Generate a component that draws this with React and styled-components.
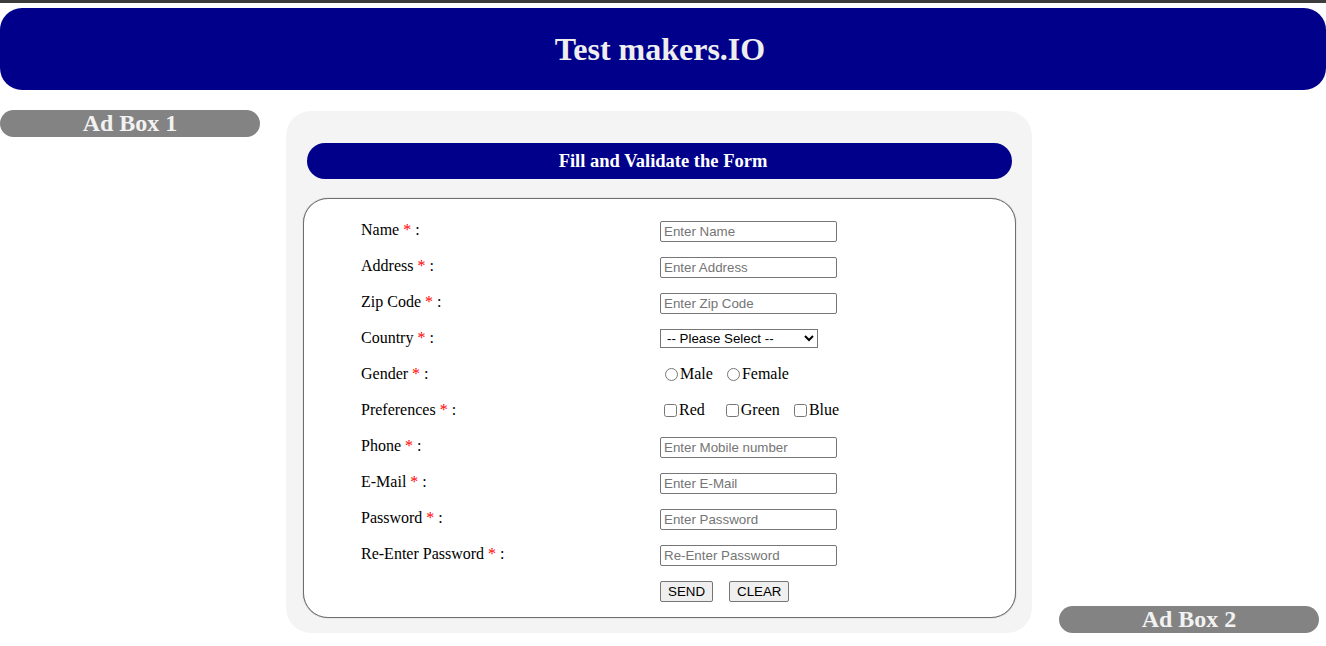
import React from "react";
import styled, { createGlobalStyle } from "styled-components";

const GlobalStyle = createGlobalStyle`
  html, body {
    margin: 0;
    padding: 0;
    background: #ffffff;
    font-family: "Liberation Serif", "Times New Roman", serif;
  }
  * { box-sizing: border-box; }
`;

const Page = styled.div`
  width: 1326px;
  min-height: 646px;
  display: flex;
  flex-direction: column;
`;

const TopRule = styled.div`
  height: 3px;
  background: #3c3c3c;
`;

const Header = styled.header`
  margin-top: 5px;
  height: 82px;
  background: #00008b;
  border-radius: 22px;
  padding-right: 6px;
  display: flex;
  align-items: center;
  justify-content: center;
`;

const HeaderTitle = styled.h1`
  margin: 0;
  font-family: "Liberation Serif", "Times New Roman", serif;
  font-size: 32px;
  font-weight: bold;
  color: #eeeeee;
`;

const Content = styled.main`
  margin-top: 20px;
  display: flex;
  align-items: flex-start;
`;

const AdBox = styled.div`
  width: 260px;
  height: 27px;
  border-radius: 14px;
  background: #838383;
  color: #f2f2f2;
  font-family: "Liberation Serif", "Times New Roman", serif;
  font-size: 24px;
  font-weight: bold;
  line-height: 27px;
  text-align: center;
  margin-left: ${(p) => p.$left || 0}px;
  margin-right: ${(p) => p.$right || 0}px;
  align-self: ${(p) => (p.$bottom ? "flex-end" : "flex-start")};
`;

const Panel = styled.section`
  width: 746px;
  margin-top: 1px;
  background: #f4f4f4;
  border-radius: 25px;
  padding: 32px 16px 15px 17px;
`;

const TitleBar = styled.div`
  margin: 0 4px 19px 4px;
  height: 36px;
  border-radius: 18px;
  background: #00008b;
  display: flex;
  align-items: center;
  justify-content: center;
`;

const Title = styled.h3`
  margin: 0;
  font-family: "Liberation Serif", "Times New Roman", serif;
  font-size: 18.5px;
  font-weight: bold;
  color: #ffffff;
  padding-left: 7px;
`;

const FormBox = styled.form`
  height: 420px;
  background: #ffffff;
  border: 1px solid #6e6e6e;
  border-radius: 25px;
  box-shadow: 0 0 1px #7a7a7a;
  padding: 14px 0 8px 57px;
  display: flex;
  flex-direction: column;
`;

const Row = styled.div`
  display: grid;
  grid-template-columns: 299px auto;
  height: 36px;
  align-items: center;
`;

const Label = styled.label`
  font-family: "Liberation Serif", "Times New Roman", serif;
  font-size: 16px;
  color: #000;
  padding-bottom: 2px;
`;

const Star = styled.span`
  color: #ff0000;
`;

const TextInput = styled.input`
  width: 177px;
  height: 21px;
  margin: 0;
  padding: 1px 3px;
  border: 1px solid #767676;
  border-radius: 2px;
  font-family: "Liberation Sans", Arial, sans-serif;
  font-size: 13.33px;
  color: #000;
  background: #fff;
  &::placeholder {
    color: #757575;
  }
`;

const Select = styled.select`
  width: 158px;
  height: 19px;
  margin: 0 0 2px 0;
  padding: 0 0 0 2px;
  border: 1px solid #767676;
  border-radius: 0;
  font-family: "Liberation Sans", Arial, sans-serif;
  font-size: 13.33px;
  color: #000;
  background: #fff;
`;

const Choices = styled.div`
  display: flex;
  align-items: center;
  font-family: "Liberation Serif", "Times New Roman", serif;
  font-size: 16px;
  padding-bottom: 2px;
`;

const Choice = styled.label`
  display: inline-flex;
  align-items: center;
  margin-left: ${(p) => p.$offset}px;
`;

const Mark = styled.input`
  width: 13px;
  height: 13px;
  margin: 0 2px 0 0;
`;

const Buttons = styled.div`
  display: flex;
  gap: 16px;
`;

const Button = styled.button`
  height: 21px;
  padding: 1px 7px;
  margin: 0;
  border: 1px solid #767676;
  border-radius: 2px;
  background: #efefef;
  font-family: "Liberation Sans", Arial, sans-serif;
  font-size: 13.33px;
  color: #000;
`;

const textFields = {
  Name: "Enter Name",
  Address: "Enter Address",
  "Zip Code": "Enter Zip Code",
};

const lowerFields = [
  ["Phone", "Enter Mobile number", "tel"],
  ["E-Mail", "Enter E-Mail", "email"],
  ["Password", "Enter Password", "password"],
  ["Re-Enter Password", "Re-Enter Password", "password"],
];

function FieldLabel({ children }) {
  return (
    <Label>
      {children} <Star>*</Star> :
    </Label>
  );
}

export default function App() {
  return (
    <>
      <GlobalStyle />
      <Page>
        <TopRule />
        <Header>
          <HeaderTitle>Test makers.IO</HeaderTitle>
        </Header>
        <Content>
          <AdBox $right={26}>Ad Box 1</AdBox>
          <Panel>
            <TitleBar>
              <Title>Fill and Validate the Form</Title>
            </TitleBar>
            <FormBox onSubmit={(e) => e.preventDefault()}>
              {Object.entries(textFields).map(([label, ph]) => (
                <Row key={label}>
                  <FieldLabel>{label}</FieldLabel>
                  <div>
                    <TextInput type="text" placeholder={ph} />
                  </div>
                </Row>
              ))}
              <Row>
                <FieldLabel>Country</FieldLabel>
                <div>
                  <Select defaultValue="">
                    <option value="">-- Please Select --</option>
                    <option>India</option>
                    <option>USA</option>
                  </Select>
                </div>
              </Row>
              <Row>
                <FieldLabel>Gender</FieldLabel>
                <Choices>
                  <Choice $offset={5}>
                    <Mark type="radio" name="gender" />
                    Male
                  </Choice>
                  <Choice $offset={14}>
                    <Mark type="radio" name="gender" />
                    Female
                  </Choice>
                </Choices>
              </Row>
              <Row>
                <FieldLabel>Preferences</FieldLabel>
                <Choices>
                  <Choice $offset={4}>
                    <Mark type="checkbox" />
                    Red
                  </Choice>
                  <Choice $offset={21}>
                    <Mark type="checkbox" />
                    Green
                  </Choice>
                  <Choice $offset={14}>
                    <Mark type="checkbox" />
                    Blue
                  </Choice>
                </Choices>
              </Row>
              {lowerFields.map(([label, ph, type]) => (
                <Row key={label}>
                  <FieldLabel>{label}</FieldLabel>
                  <div>
                    <TextInput type={type} placeholder={ph} />
                  </div>
                </Row>
              ))}
              <Row>
                <span />
                <Buttons>
                  <Button type="submit">SEND</Button>
                  <Button type="reset">CLEAR</Button>
                </Buttons>
              </Row>
            </FormBox>
          </Panel>
          <AdBox $left={27} $bottom>
            Ad Box 2
          </AdBox>
        </Content>
      </Page>
    </>
  );
}
